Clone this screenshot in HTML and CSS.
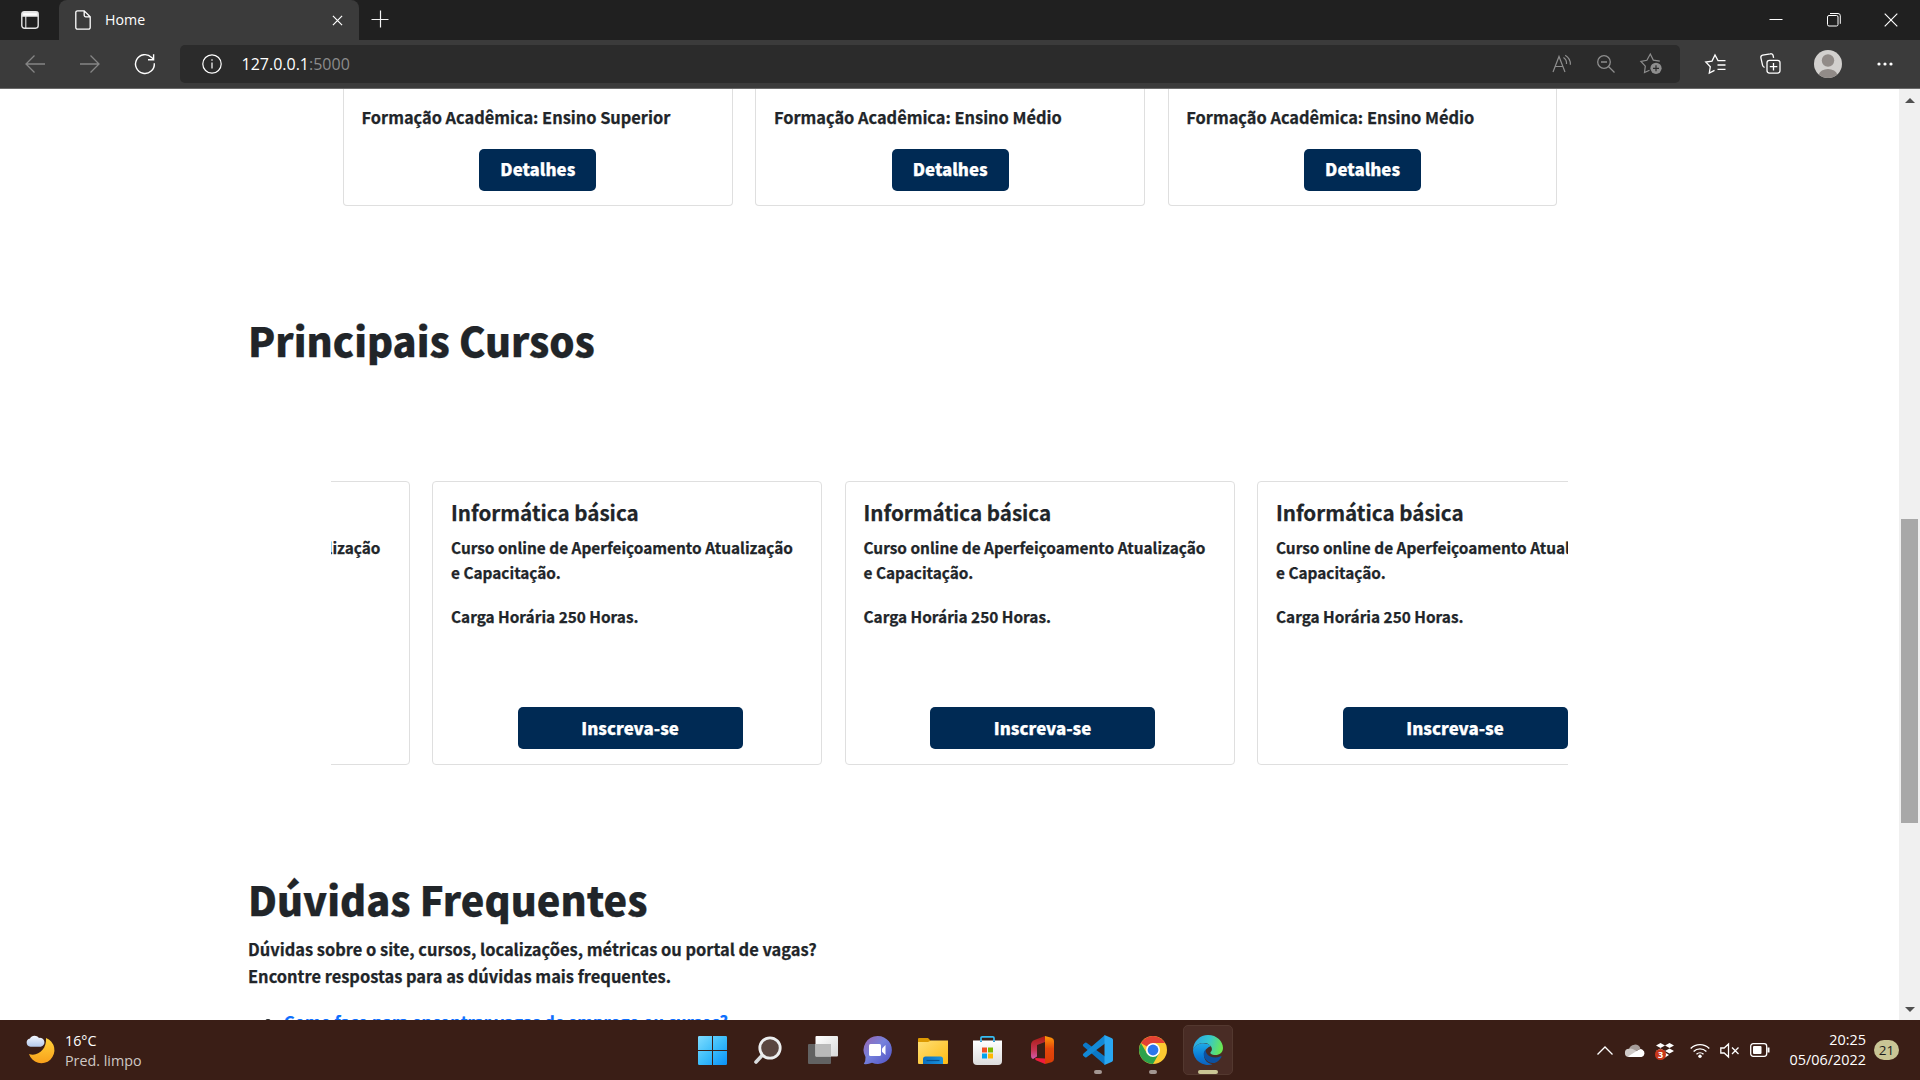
FILE: index.html
```html
<!DOCTYPE html>
<html lang="pt-BR">
<head>
<meta charset="utf-8">
<title>Home</title>
<link rel="stylesheet" href="styles.css">
</head>
<body>
<div class="screen">
  <header class="tabstrip">
    <div class="tab-actions">
      <svg width="18" height="18" viewBox="0 0 18 18" fill="none" stroke="#e4e4e4" stroke-width="1.4"><rect x=".8" y=".8" width="16.4" height="16.4" rx="2.6"/><path d="M1.5 1.5h15v3.6h-15z" fill="#fff"/><path d="M4.8 5v12" stroke-width="1.1"/></svg>
    </div>
    <div class="tab">
      <svg class="tab-doc" width="16" height="20" viewBox="0 0 16 20" fill="none" stroke="#fff" stroke-width="1.3"><path d="M2.6.8h6.6L15.2 6.8v10.6a1.8 1.8 0 0 1-1.8 1.8H2.6A1.8 1.8 0 0 1 .8 17.4V2.6A1.8 1.8 0 0 1 2.6.8zM9.2.8v4.4a1.6 1.6 0 0 0 1.6 1.6h4.4"/></svg>
      <span class="tab-title">Home</span>
      <svg class="tab-close" width="11" height="11" viewBox="0 0 12 12" stroke="#fff" stroke-width="1.3"><path d="M1 1l10 10M11 1L1 11"/></svg>
    </div>
    <svg class="new-tab" width="18" height="18" viewBox="0 0 18 18" stroke="#f4f4f4" stroke-width="1.2"><path d="M9.5 .5v17M.5 9.5h17"/></svg>
    <div class="window-controls">
      <span><svg width="14" height="14" viewBox="0 0 14 14" stroke="#fff"><path d="M.5 6.5h13"/></svg></span>
      <span><svg width="14" height="14" viewBox="0 0 14 14" fill="none" stroke="#fff"><rect x=".5" y="2.5" width="10.5" height="10.5" rx="1.5"/><path d="M3 .5h8a2.3 2.3 0 0 1 2.3 2.3v8"/></svg></span>
      <span><svg width="14" height="14" viewBox="0 0 14 14" stroke="#fff" stroke-width="1.15"><path d="M.7.7l12.6 12.6M13.3.7L.7 13.3"/></svg></span>
    </div>
  </header>

  <nav class="toolbar">
    <span class="nav-btn dim"><svg width="20" height="18" viewBox="0 0 20 18" fill="none" stroke="currentColor" stroke-width="1.3"><path d="M20 9H1M9.5.5L1 9l8.5 8.5"/></svg></span>
    <span class="nav-btn dim"><svg width="20" height="18" viewBox="0 0 20 18" fill="none" stroke="currentColor" stroke-width="1.3"><path d="M0 9h19M10.5.5L19 9l-8.5 8.5"/></svg></span>
    <span class="nav-btn"><svg width="22" height="22" viewBox="0 0 22 22" fill="none" stroke="#fff" stroke-width="1.4"><path d="M20.3 10.2A9.4 9.4 0 1 1 17.6 4.4L19.3 6.3M19.6 1.2v5.5h-5.6"/></svg></span>
    <div class="address">
      <svg width="20" height="20" viewBox="0 0 20 20" fill="none" stroke="#fff" stroke-width="1.2"><circle cx="10" cy="10" r="9.2"/><path d="M10 8.5v6M10 5.3v1.5"/></svg>
      <span class="url">127.0.0.1<span class="port">:5000</span></span>
      <div class="address-icons">
        <svg width="20" height="19" viewBox="0 0 20 19" fill="none" stroke="currentColor" stroke-width="1.2"><path d="M1 18L7 2.5 13 18M3.1 12.5h7.8M11.5 3.5a7 7 0 0 1 3 6.5M13.2 1.2a10.5 10.5 0 0 1 5.2 9.5"/></svg>
        <svg width="18" height="18" viewBox="0 0 18 18" fill="none" stroke="currentColor" stroke-width="1.3"><circle cx="7" cy="7" r="6.3"/><path d="M4 7h6M11.5 11.5l6 6"/></svg>
        <svg width="22" height="21" viewBox="0 0 22 21" fill="none" stroke="currentColor" stroke-width="1.2"><path d="M9.5 17.2l-5 2.3.8-6.4L.9 8.4l6-1.1L10.3 1l3 6.1 6.5 1"/><circle cx="16" cy="15.3" r="5.6" fill="currentColor" stroke="none"/><path d="M16 12.3v6M13 15.3h6" stroke="#2b2b2b"/></svg>
      </div>
    </div>
    <div class="tools">
      <svg width="21" height="20" viewBox="0 0 21 20" fill="none" stroke="#fff" stroke-width="1.3"><path d="M9.5 16.3L4.3 19l1-6.3L.8 8l6.2-.9L10 1l3 5.6h7.5M12.5 11h8M12.5 15.3h8"/></svg>
      <svg width="21" height="21" viewBox="0 0 21 21" fill="none" stroke="#fff" stroke-width="1.3"><rect x="7" y="7.3" width="13" height="12.8" rx="2.5"/><path d="M13.5 10v7.5M9.8 13.7h7.5M4.6 14.3a2.5 2.5 0 0 1-2-1.9L.9 4.9A2.3 2.3 0 0 1 2.6 2.2L10.3.8a2.3 2.3 0 0 1 2.8 1.7l.5 2.3"/></svg>
      <svg class="avatar" width="28" height="28" viewBox="0 0 28 28"><circle cx="14" cy="14" r="14" fill="#d2d0ce"/><circle cx="14" cy="10.5" r="6.2" fill="#918b88"/><path d="M4.7 24.5a9.5 7 0 0 1 18.6 0A14 14 0 0 1 4.7 24.5z" fill="#918b88"/></svg>
      <svg width="16" height="4" viewBox="0 0 16 4" fill="#fff"><circle cx="2" cy="2" r="1.6"/><circle cx="8" cy="2" r="1.6"/><circle cx="14" cy="2" r="1.6"/></svg>
    </div>
  </nav>

  <div class="viewport">
    <main class="page">
      <section class="jobs">
        <article class="job"><p>Formação Acadêmica: Ensino Superior</p><a class="btn">Detalhes</a></article>
        <article class="job"><p>Formação Acadêmica: Ensino Médio</p><a class="btn">Detalhes</a></article>
        <article class="job"><p>Formação Acadêmica: Ensino Médio</p><a class="btn">Detalhes</a></article>
      </section>

      <h1 class="courses-title">Principais Cursos</h1>
      <section class="carousel">
        <div class="track">
          <article class="course"><h2>Informática básica</h2><p>Curso online de Aperfeiçoamento Atualização e Capacitação.</p><p>Carga Horária 250 Horas.</p><a class="btn wide">Inscreva-se</a></article>
          <article class="course"><h2>Informática básica</h2><p>Curso online de Aperfeiçoamento Atualização e Capacitação.</p><p>Carga Horária 250 Horas.</p><a class="btn wide">Inscreva-se</a></article>
          <article class="course"><h2>Informática básica</h2><p>Curso online de Aperfeiçoamento Atualização e Capacitação.</p><p>Carga Horária 250 Horas.</p><a class="btn wide">Inscreva-se</a></article>
          <article class="course"><h2>Informática básica</h2><p>Curso online de Aperfeiçoamento Atualização e Capacitação.</p><p>Carga Horária 250 Horas.</p><a class="btn wide">Inscreva-se</a></article>
        </div>
      </section>

      <h1 class="faq-title">Dúvidas Frequentes</h1>
      <p class="faq-intro">Dúvidas sobre o site, cursos, localizações, métricas ou portal de vagas?<br>Encontre respostas para as dúvidas mais frequentes.</p>
      <ul class="faq-list"><li><a>Como faço para encontrar vagas de emprego ou cursos?</a></li></ul>
    </main>
    <div class="scrollbar">
      <svg width="10" height="5" viewBox="0 0 10 5"><path d="M0 5l5-5 5 5z" fill="#505050"/></svg>
      <div class="thumb"></div>
      <svg width="10" height="5" viewBox="0 0 10 5"><path d="M0 0l5 5 5-5z" fill="#505050"/></svg>
    </div>
  </div>

  <footer class="taskbar">
    <div class="weather">
      <svg width="28" height="28" viewBox="0 0 28 28"><defs><linearGradient id="moon" x1="0" y1="0" x2="0" y2="1"><stop offset="0" stop-color="#ffd23a"/><stop offset="1" stop-color="#f9a11b"/></linearGradient><linearGradient id="cloud" x1="0" y1="0" x2="0" y2="1"><stop offset="0" stop-color="#f4f8ff"/><stop offset="1" stop-color="#b3c8ea"/></linearGradient></defs><path d="M20 3A13 13 0 1 1 3 19C12 22 21 14 20 3z" fill="url(#moon)"/><path d="M4.5 11.8a4.2 4.2 0 0 1-.5-8.3 5.3 5.3 0 0 1 9-.6 4.5 4.5 0 0 1 1.8 8.9z" fill="url(#cloud)"/></svg>
      <div class="weather-text"><span>16°C</span><span class="muted">Pred. limpo</span></div>
    </div>
    <div class="apps">
      <span class="app"><svg width="29" height="29" viewBox="0 0 29 29"><defs><linearGradient id="win" gradientUnits="userSpaceOnUse" x1="0" y1="0" x2="29" y2="29"><stop offset="0" stop-color="#7fdcff"/><stop offset=".5" stop-color="#3cbdfa"/><stop offset="1" stop-color="#0a91f7"/></linearGradient></defs><path d="M0 1.2Q0 0 1.2 0H14v14H0zM15 0h12.8Q29 0 29 1.2V14H15zM0 15h14v14H1.2Q0 29 0 27.8zM15 15h14v12.8Q29 29 27.8 29H15z" fill="url(#win)"/></svg></span>
      <span class="app"><svg width="28" height="28" viewBox="0 0 28 28"><path d="M9 18.5L2 26" stroke="#d9dcde" stroke-width="3.6" stroke-linecap="round"/><circle cx="16" cy="12" r="10.2" fill="#5a4640" stroke="#eceeef" stroke-width="2.8"/></svg></span>
      <span class="app"><svg width="30" height="28" viewBox="0 0 30 28"><defs><linearGradient id="tv" x1="0" y1="0" x2="1" y2="1"><stop offset="0" stop-color="#fff"/><stop offset="1" stop-color="#d8d8d8"/></linearGradient></defs><rect y="8" width="23" height="20" rx="1" fill="#626262"/><rect x="7.5" width="22.5" height="20.5" rx="1" fill="url(#tv)"/><path d="M7.5 8H23v12.5H7.5z" fill="#b9b9b9"/></svg></span>
      <span class="app"><svg width="29" height="28" viewBox="0 0 29 28"><defs><linearGradient id="chat" x1="0" y1="0" x2="1" y2="1"><stop offset="0" stop-color="#9a62ad"/><stop offset=".45" stop-color="#7682dc"/><stop offset="1" stop-color="#4f50c4"/></linearGradient></defs><path d="M15 0a14 14 0 1 1-6 26.7Q5 28.6.8 28 2.8 25.5 2.5 21A14 14 0 0 1 15 0z" fill="url(#chat)"/><rect x="6" y="8" width="12" height="12" rx="1.5" fill="#fff"/><path d="M19 12.5L22.5 9v10L19 15.7z" fill="#fff"/></svg></span>
      <span class="app"><svg width="30" height="27" viewBox="0 0 30 27"><defs><linearGradient id="fold" x1="0" y1="0" x2="1" y2="1"><stop offset="0" stop-color="#ffdf75"/><stop offset="1" stop-color="#fdbb14"/></linearGradient><linearGradient id="pocket" x1="0" y1="0" x2="1" y2="0"><stop offset="0" stop-color="#0b6fc0"/><stop offset="1" stop-color="#1a93dd"/></linearGradient></defs><path d="M0 7V2Q0 1 1 1h9l3 3h16q1 0 1 1v5H0z" fill="#dc9902"/><path d="M0 26V5h10l3-1.5h17V26q0 1-1 1H1q-1 0-1-1z" fill="url(#fold)"/><path d="M5 27v-5q0-2.5 2.5-2.5h15Q25 19.5 25 22v5z" fill="url(#pocket)"/><path d="M8.5 23.5h13" stroke="#074f8c" stroke-width="1.2"/></svg></span>
      <span class="app shift"><svg width="29" height="29" viewBox="0 0 29 29"><path d="M8 5V2q0-1.2 1.2-1.2h10.6Q21 .8 21 2v3" fill="none" stroke="#36bdf2" stroke-width="1.7"/><defs><linearGradient id="bag" x1="0" y1="0" x2="0" y2="1"><stop offset="0" stop-color="#fff"/><stop offset="1" stop-color="#dcdcdc"/></linearGradient></defs><path d="M0 4.5h29v20.5a4 4 0 0 1-4 4H4a4 4 0 0 1-4-4z" fill="url(#bag)"/><path d="M9 11.5h5v5H9z" fill="#f04f23"/><path d="M15 11.5h5v5h-5z" fill="#7eb900"/><path d="M9 17.5h5v5H9z" fill="#00a3ee"/><path d="M15 17.5h5v5h-5z" fill="#feb800"/><path d="M8 4.5v1.5M21 4.5v1.5" stroke="#1590cc" stroke-width="1.7"/></svg></span>
      <span class="app shift"><svg width="23" height="28" viewBox="0 0 23 28"><defs><linearGradient id="off1" x1="0" y1="0" x2="0" y2="1"><stop offset="0" stop-color="#a81a12"/><stop offset=".6" stop-color="#c63550"/><stop offset="1" stop-color="#d35bb0"/></linearGradient><linearGradient id="off2" x1="0" y1="0" x2="0" y2="1"><stop offset="0" stop-color="#ff9a08"/><stop offset=".45" stop-color="#e4470b"/><stop offset="1" stop-color="#d83c06"/></linearGradient></defs><path d="M14 0L3.5 4Q0 5.3 0 9v11q0 2.5 2 3l4-2.5V9l8-3z" fill="url(#off1)"/><path d="M14 0l6.5 1.8Q23 2.5 23 5v18q0 2.5-2.5 3.2L14 28z" fill="url(#off2)"/><path d="M14 28v-5.5L4.5 22q-1 1.3.5 2.2z" fill="#f01c3c"/></svg></span>
      <span class="app running"><svg width="30" height="30" viewBox="0 0 30 30"><path d="M0 9.5L2 7.7q.8-.6 1.6 0L22 21.5V30L.5 11.5Q-.5 10.5 0 9.5z" fill="#0a78c8"/><path d="M0 20.5l2 1.8q.8.6 1.6 0L22 8.5V0L.5 18.5q-1 1 -.5 2z" fill="#1389d6"/><path d="M21.5 0L29 3.3q1 .5 1 1.6v20.2q0 1.1-1 1.6L21.5 30z" fill="#29a7f2"/></svg></span>
      <span class="app running"><svg width="28" height="28" viewBox="0 0 28 28"><circle cx="14" cy="14" r="14" fill="#fcc931"/><path d="M14 14L1.88 7A14 14 0 0 1 26.12 7H14z" fill="#e34133"/><path d="M1.88 7A14 14 0 0 0 14 28L20 17.5 14 14 8 17.5z" fill="#2ba24c"/><circle cx="14" cy="14" r="7" fill="#fff"/><circle cx="14" cy="14" r="5.4" fill="#2a76ec"/></svg></span>
      <span class="app active"><svg width="30" height="30" viewBox="0 0 30 30"><defs><linearGradient id="e1" x1="0" y1=".3" x2="1" y2=".5"><stop offset="0" stop-color="#2aa5e4"/><stop offset=".5" stop-color="#34c6cf"/><stop offset="1" stop-color="#6be84f"/></linearGradient><linearGradient id="e2" x1="0" y1="0" x2="0" y2="1"><stop offset="0" stop-color="#1eaae6"/><stop offset=".6" stop-color="#0a7bd6"/><stop offset="1" stop-color="#0c62be"/></linearGradient></defs><path d="M0 15a15 15 0 0 0 19.5 14.3C12 28 10 22 11.5 17.5 12.5 13 18 11 18 11 13 6 2 8 0 15z" fill="url(#e2)"/><path d="M0 15C.5 6 7 0 15 0c9 0 15 6.500 15 13 0 4.500-3.500 7-7.500 7-4 0-5.500-1.500-5-2.700 1.200-1.300 1.600-2.300 1.300-4C18 10 14.500 8 11 8 5.500 8 1.500 11 0 15z" fill="url(#e1)"/><path d="M12.500 14.500c-2 2-2.500 5-1 8 2 4 6 6 10 5.500 3.500-1.200 5.500-3.500 7-6 .3-.8-.3-1-1-.7-5 2.500-11 1-13.500-2.300-1-1.500-1.500-3-1.500-4.500z" fill="#0d51a0"/></svg></span>
    </div>
    <div class="tray">
      <svg class="chevron" width="16" height="9" viewBox="0 0 16 9" fill="none" stroke="#fff" stroke-width="1.3"><path d="M.5 8.5L8 1l7.5 7.5"/></svg>
      <svg class="onedrive" width="20" height="13" viewBox="0 0 20 13"><path d="M4 5.5A6 6 0 0 1 15.5 4.5L8 9z" fill="#a69d9a"/><path d="M4 13a4 4 0 0 1 0-8.2Q7 4 10 6.3L17.5 11 15 13z" fill="#cfcac8"/><path d="M3 12.5L14 5.5q2-.9 3.5.3a3.9 3.9 0 0 1-1 7.2H5z" fill="#fff"/></svg>
      <span class="dropbox"><svg width="18" height="15" viewBox="0 0 18 15" fill="#fff"><path d="M4.5 0L9 2.5 4.5 5 0 2.5zM13.5 0L18 2.5 13.5 5 9 2.5zM4.5 5.5L9 8l-4.5 2.5L0 8zM13.5 5.5L18 8l-4.5 2.5L9 8zM9 9.5l4 2.5-4 2.5L5 12z"/></svg><span class="count">3</span></span>
      <svg class="wifi" width="20" height="15" viewBox="0 0 20 15" fill="none" stroke="#fff" stroke-width="1.4"><path d="M.7 5.5a13.2 13.2 0 0 1 18.6 0M3.6 8.5a9 9 0 0 1 12.8 0M6.5 11.3a5 5 0 0 1 7 0"/><circle cx="10" cy="13.2" r="1.7" fill="#fff" stroke="none"/></svg>
      <svg class="speaker" width="20" height="15" viewBox="0 0 20 15" fill="none" stroke="#fff" stroke-width="1.3"><path d="M.8 5h3.4L8.500 1v13L4.200 10H.8zM12 4.500l6.500 6.500M18.500 4.500L12 11"/></svg>
      <svg class="battery" width="20" height="14" viewBox="0 0 20 14" fill="none" stroke="#fff" stroke-width="1.3"><rect x=".7" y=".7" width="16" height="12.6" rx="2.5"/><path d="M18.5 4.5v5" stroke-width="2"/><rect x="3" y="3" width="8.5" height="8" rx="1" fill="#fff" stroke="none"/></svg>
      <div class="clock"><span>20:25</span><span>05/06/2022</span></div>
      <span class="badge">21</span>
    </div>
  </footer>
</div>
</body>
</html>
```
FILE: styles.css
```css
* { box-sizing: border-box; }

body {
  margin: 0;
  font-family: "Open Sans", "Noto Sans", sans-serif;
}

svg { display: block; flex: none; overflow: visible; }

.screen {
  display: flex;
  flex-direction: column;
  width: 1920px;
  height: 1080px;
  overflow: hidden;
}

/* Browser chrome */
.tabstrip {
  display: flex;
  align-items: center;
  height: 40px;
  background: #202020;
  color: #fff;
}

.tab-actions {
  display: flex;
  width: 59px;
  height: 40px;
  padding: 11px 0 0 21px;
}

.tab {
  display: flex;
  align-items: center;
  width: 300px;
  height: 40px;
  padding: 0 16px 0 16px;
  background: #3b3b3b;
  border-radius: 8px 8px 0 0;
}

.tab-title {
  flex: 1;
  margin-left: 14px;
  font-size: 14.2px;
  line-height: 20px;
}

.tab-close { margin-top: 1px; }

.new-tab { margin: 0 0 2px 12px; }

.window-controls {
  display: flex;
  margin-left: auto;
}

.window-controls span {
  display: grid;
  place-items: center;
  width: 57.5px;
  height: 40px;
}

.toolbar {
  display: flex;
  align-items: center;
  height: 49px;
  padding-left: 7px;
  padding-bottom: 1px;
  background: #3b3b3b;
  border-bottom: 1px solid #6a6a6a;
  color: #fff;
}

.nav-btn {
  display: grid;
  place-items: center;
  width: 55px;
}

.dim { color: #858585; }

.address {
  display: flex;
  align-items: center;
  width: 1500px;
  height: 38px;
  margin-left: 8px;
  padding: 0 18px 0 22px;
  border-radius: 5px;
  background: #2b2b2b;
}

.url {
  margin-left: 19.5px;
  font-size: 16px;
  line-height: 22px;
}

.port { color: #8c8c8c; }

.address-icons {
  display: flex;
  align-items: center;
  gap: 25px;
  margin-left: auto;
  color: #8e8e8e;
}

.tools {
  display: flex;
  align-items: center;
  flex: 1;
  justify-content: space-between;
  padding: 0 27px 0 25px;
}

.avatar { margin: 0 1px 0 -1px; }

/* Web page */
.viewport {
  display: flex;
  height: 931px;
  overflow: hidden;
  background: #fff;
}

.page {
  flex: 1;
  min-width: 0;
  padding-left: 248px;
  font-family: "Noto Sans CJK JP", "Noto Sans", sans-serif;
  font-weight: 700;
  color: #212529;
  -webkit-text-stroke: 0.25px;
}

.page h1,
.page h2,
.page p,
.page ul { margin: 0; }

.jobs {
  display: flex;
  gap: 22.9px;
  margin-left: 95px;
}

.job {
  width: 389.5px;
  height: 117px;
  padding: 15px 17px 0 17.5px;
  border: 1px solid #dfdfdf;
  border-top: 0;
  border-radius: 0 0 4px 4px;
  font-size: 16.38px;
  line-height: 26px;
}

.btn {
  display: block;
  width: 117px;
  height: 42px;
  border-radius: 5px;
  background: #002a54;
  color: #fff;
  font-size: 16.9px;
  font-weight: 900;
  line-height: 41px;
  text-align: center;
}

.job .btn {
  margin: 19px 0 0 117.8px;
  line-height: 40px;
}

.page h1 {
  font-size: 39.8px;
  font-weight: 900;
  line-height: 48px;
}

.page .courses-title { margin-top: 110px; }

.carousel {
  width: 1237px;
  height: 284px;
  margin: 117px 0 0 83px;
  overflow: hidden;
}

.track {
  display: flex;
  gap: 22.7px;
  height: 100%;
  margin-left: -311.2px;
}

.course {
  display: flex;
  flex-direction: column;
  flex: none;
  width: 389.8px;
  padding: 17px 17px 15px 17.7px;
  border: 1px solid #dfdfdf;
  border-radius: 4px;
}

.course h2 {
  font-size: 20.6px;
  line-height: 26px;
}

.course p {
  padding-right: 8px;
  margin-top: 19px;
  font-size: 15.38px;
  line-height: 25px;
}

.course h2 + p { margin-top: 10px; }

.btn.wide {
  width: 225px;
  margin: auto 0 0 66.6px;
}

.page .faq-title { margin-top: 110px; }

.page .faq-intro {
  margin-top: 13px;
  font-size: 16.43px;
  line-height: 27px;
}

.page .faq-list {
  margin-top: 18px;
  padding-left: 36px;
  font-size: 16.34px;
  line-height: 27px;
}

.faq-list a { color: #0d6efd; }

.scrollbar {
  display: flex;
  flex-direction: column;
  align-items: center;
  width: 21px;
  padding: 9px 0 8px;
  background: #f0f0f0;
}

.thumb {
  width: 17px;
  height: 304px;
  margin: 416px 0 auto;
  background: #a8a8a8;
}

/* Taskbar */
.taskbar {
  display: flex;
  height: 60px;
  background: #3a1e16;
  color: #fff;
}

.weather {
  display: flex;
  width: 685px;
  padding: 15px 0 0 26px;
}

.weather-text {
  display: flex;
  flex-direction: column;
  margin: -4px 0 0 11px;
  font-size: 14.3px;
  line-height: 20px;
}

.muted { color: #cfc8c5; }

.apps { display: flex; }

.app {
  position: relative;
  display: grid;
  place-items: center;
  width: 55.1px;
  height: 60px;
}

.shift { padding-right: 2px; }

.running::after,
.active::after {
  content: "";
  position: absolute;
  bottom: 6px;
  left: 50%;
  width: 8px;
  height: 4px;
  margin-left: -4px;
  border-radius: 2px;
  background: #a39792;
}

.active::before {
  content: "";
  position: absolute;
  inset: 5px 2.5px;
  border: 1px solid #53382f;
  border-radius: 5px;
  background: #492c25;
}

.active::after {
  width: 20px;
  margin-left: -10px;
  background: #cac695;
}

.active svg { position: relative; }

.tray {
  display: flex;
  align-items: center;
  flex: 1;
  justify-content: flex-end;
  padding-right: 21px;
}

.onedrive { margin-left: 12px; }

.dropbox {
  position: relative;
  margin-left: 11px;
}

.count {
  position: absolute;
  left: -1px;
  top: 6px;
  width: 11px;
  height: 11px;
  border-radius: 50%;
  background: #c8371a;
  font-size: 9px;
  font-weight: 700;
  line-height: 11px;
  text-align: center;
}

.wifi { margin-left: 16px; }
.speaker { margin-left: 10px; }
.battery { margin-left: 10px; }

.clock {
  display: flex;
  flex-direction: column;
  width: 96px;
  margin-bottom: 1px;
  font-size: 14.4px;
  line-height: 20px;
  text-align: right;
}

.badge {
  width: 25px;
  height: 20px;
  margin-left: 8px;
  border-radius: 10px;
  background: #c9c595;
  color: #1c1c1c;
  font-size: 13.5px;
  line-height: 21px;
  text-align: center;
}
```
